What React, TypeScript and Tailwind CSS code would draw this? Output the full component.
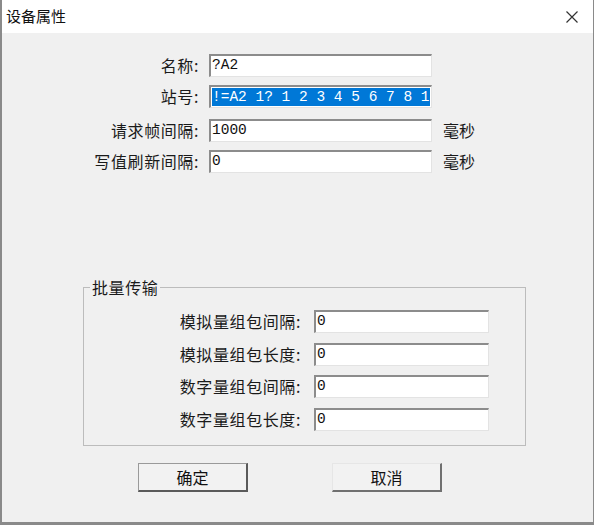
import React from "react";

const cjk = "font-['Microsoft_YaHei','Noto_Sans_CJK_SC',sans-serif]";
const mono = "font-['Liberation_Mono','Noto_Sans_CJK_SC',monospace]";

const Field = ({ value, selected, w }: { value: string; selected?: boolean; w: string }) => (
  <div
    className={`${w} h-[23px] bg-white border-t-2 border-l-2 border-r border-b border-t-[#8c8c8c] border-l-[#8c8c8c] border-r-[#e3e3e3] border-b-[#e3e3e3] flex items-center pl-[1px] overflow-hidden ${mono} text-[14.5px] text-[#111]`}
  >
    {selected ? (
      <span className="bg-[#0078d7] text-white leading-[18px] whitespace-pre">{value}</span>
    ) : (
      <span className="whitespace-pre">{value}</span>
    )}
  </div>
);

const TopRow = ({ label, value, unit, selected, className = "" }: { label: string; value: string; unit?: string; selected?: boolean; className?: string }) => (
  <div className={`flex items-center ${className}`}>
    <div className="w-[197px] text-right text-[16px] tracking-[0.6px] text-[#1a1a1a]">{label}</div>
    <div className="ml-[10px]">
      <Field value={value} selected={selected} w="w-[223px]" />
    </div>
    {unit && <div className="ml-[11px] text-[16px] text-[#1a1a1a]">{unit}</div>}
  </div>
);

const GroupRow = ({ label, value, className = "" }: { label: string; value: string; className?: string }) => (
  <div className={`flex items-center ${className}`}>
    <div className="w-[217px] text-right text-[16px] tracking-[0.6px] text-[#1a1a1a]">{label}</div>
    <div className="ml-[13px]">
      <Field value={value} w="w-[175px]" />
    </div>
  </div>
);

export default function App() {
  return (
    <div className={`w-[594px] h-[525px] bg-[#f0f0f0] border-l-2 border-r border-b-[3px] border-[#8a8a8a] flex flex-col ${cjk}`}>
      <div className="h-[33px] bg-white flex items-center justify-between shrink-0">
        <div className="ml-[4px] text-[15px] text-[#111]">设备属性</div>
        <svg width="12" height="12" viewBox="0 0 12 12" className="mr-[15px]">
          <path d="M0.5 0.5 L11.5 11.5 M11.5 0.5 L0.5 11.5" stroke="#333" strokeWidth="1.2" fill="none" />
        </svg>
      </div>

      <TopRow label="名称:" value="?A2" className="mt-[20px]" />
      <TopRow label="站号:" value="!=A2 1? 1 2 3 4 5 6 7 8 1" selected className="mt-[7px]" />
      <TopRow label="请求帧间隔:" value="1000" unit="毫秒" className="mt-[10px]" />
      <TopRow label="写值刷新间隔:" value="0" unit="毫秒" className="mt-[7px]" />

      <fieldset className="ml-[81px] w-[443px] mt-[104px] border border-[#bcbcbc]">
        <legend className="ml-[6px] px-[2px] text-[16px] leading-[20px] tracking-[0.6px] text-[#1a1a1a]">批量传输</legend>
        <div className="mt-[12px] pb-[14px]">
          <GroupRow label="模拟量组包间隔:" value="0" />
          <GroupRow label="模拟量组包长度:" value="0" className="mt-[9px]" />
          <GroupRow label="数字量组包间隔:" value="0" className="mt-[8px]" />
          <GroupRow label="数字量组包长度:" value="0" className="mt-[9px]" />
        </div>
      </fieldset>

      <div className="flex mt-[17px]">
        <button className="ml-[136px] w-[110px] h-[29px] bg-[#f2f2f2] border border-t-[#9a9a9a] border-l-[#9a9a9a] border-r-2 border-b-2 border-r-[#5a5a5a] border-b-[#5a5a5a] text-[16px] text-[#111]">
          确定
        </button>
        <button className="ml-[84px] w-[110px] h-[29px] bg-[#f2f2f2] border border-t-[#e6e6e6] border-l-[#e6e6e6] border-r-2 border-b-2 border-r-[#707070] border-b-[#707070] text-[16px] text-[#111]">
          取消
        </button>
      </div>
    </div>
  );
}
